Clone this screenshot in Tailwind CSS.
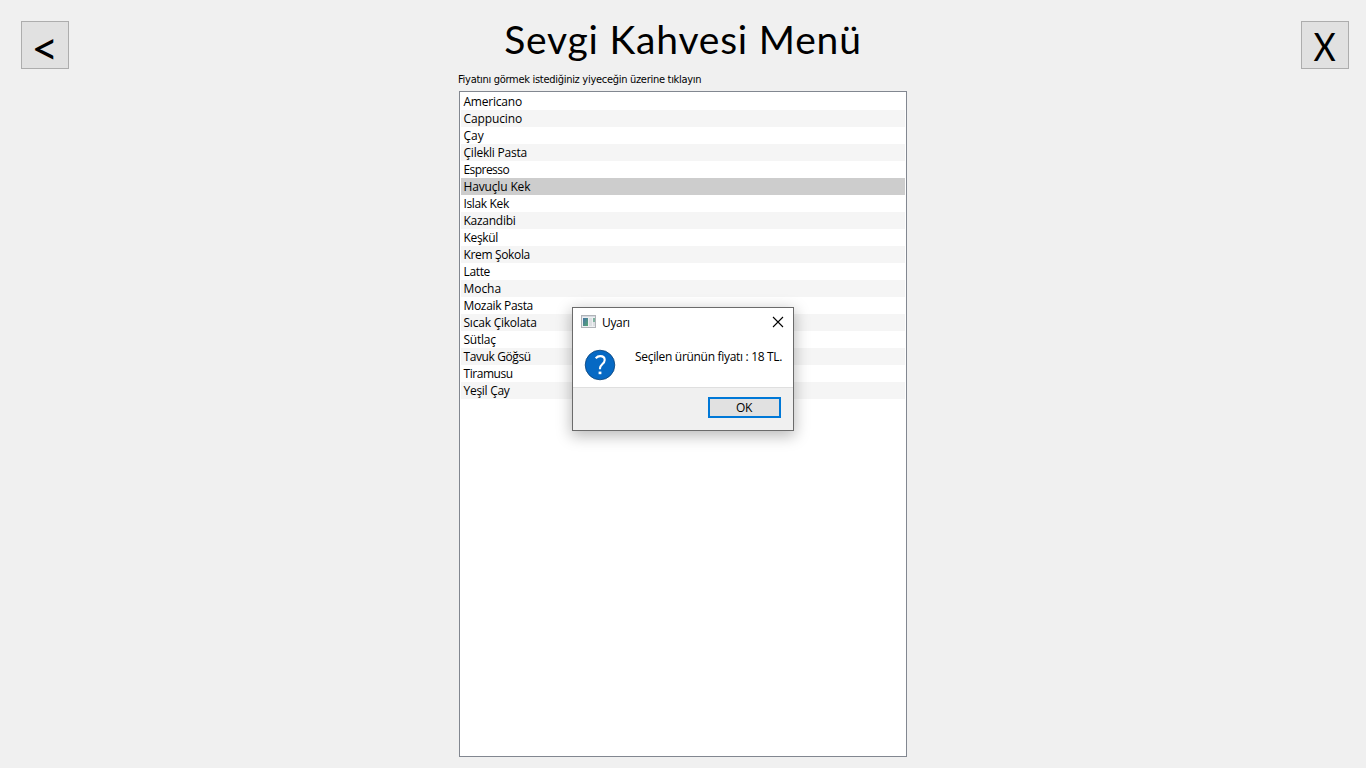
<!DOCTYPE html>
<html lang="tr">
<head>
<meta charset="utf-8">
<title>Sevgi Kahvesi Menü</title>
<script src="https://cdn.jsdelivr.net/npm/@tailwindcss/browser@4"></script>
</head>
<body class="relative flex h-screen w-screen items-start justify-between overflow-hidden bg-[#f0f0f0] pr-[17px] pl-[21px] font-['Open_Sans',sans-serif] text-xs text-black">
<button class="mt-[21px] flex size-12 items-center justify-center border border-[#adadad] bg-[#e1e1e1]" aria-label="Geri"><span class="mt-1 font-['Lato',sans-serif] text-[47px] leading-none">&lt;</span></button>

<main class="mr-1 flex h-full w-[448px] flex-col">
  <h1 class="mt-[15px] h-[55px] text-center font-['Lato',sans-serif] text-[39px] leading-[49px] tracking-[0.8px] whitespace-nowrap">Sevgi Kahvesi Menü</h1>
  <p class="-ml-px h-[21px] pt-[3px] font-['DejaVu_Sans_Condensed','DejaVu_Sans',sans-serif] text-[11px] leading-[14px] tracking-[-0.29px] whitespace-nowrap">Fiyatını görmek istediğiniz yiyeceğin üzerine tıklayın</p>
  <ul class="h-[666px] border border-[#828790] bg-white p-px [&>li]:h-[17px] [&>li]:pl-[2.5px] [&>li]:leading-[17px] [&>li]:whitespace-nowrap [&>li:nth-child(even)]:bg-[#f5f5f5]">
    <li class="tracking-[-0.22px]">Americano</li>
    <li class="tracking-[-0.12px]">Cappucino</li>
    <li>Çay</li>
    <li class="tracking-[-0.22px]">Çilekli Pasta</li>
    <li class="tracking-[-0.55px]">Espresso</li>
    <li class="bg-[#cdcdcd]! tracking-[-0.15px]">Havuçlu Kek</li>
    <li class="tracking-[-0.35px]">Islak Kek</li>
    <li class="tracking-[-0.27px]">Kazandibi</li>
    <li class="tracking-[-0.35px]">Keşkül</li>
    <li class="tracking-[-0.35px]">Krem Şokola</li>
    <li class="tracking-[-0.35px]">Latte</li>
    <li class="tracking-[-0.05px]">Mocha</li>
    <li class="tracking-[-0.32px]">Mozaik Pasta</li>
    <li class="tracking-[-0.22px]">Sıcak Çikolata</li>
    <li class="tracking-[-0.25px]">Sütlaç</li>
    <li class="tracking-[-0.4px]">Tavuk Göğsü</li>
    <li class="tracking-[-0.45px]">Tiramusu</li>
    <li class="tracking-[-0.28px]">Yeşil Çay</li>
  </ul>
</main>

<button class="mt-[21px] flex size-12 items-center justify-center border border-[#adadad] bg-[#e1e1e1]" aria-label="Kapat"><span class="mt-[3px] scale-x-[0.88] font-['Lato',sans-serif] text-[39px] leading-none">X</span></button>

<section class="absolute top-[307px] left-[572px] flex h-[124px] w-[222px] flex-col border border-[#6b6b6b] bg-white shadow-[0_4px_14px_1px_rgba(0,0,0,0.27)]">
  <header class="flex h-[30px] items-center pr-[9px] pl-2">
    <svg class="-mt-0.5 size-4" viewBox="0 0 16 16" shape-rendering="crispEdges">
      <defs><linearGradient id="pane" x2="1" y2="1"><stop stop-color="#4672a5"/><stop offset="1" stop-color="#57a775"/></linearGradient></defs>
      <rect y="1" width="15" height="13" fill="#b0b3b8"/><rect x="1" y="2" width="13" height="11" fill="#eef0f2"/>
      <rect x="1" y="2" width="13" height="1" fill="#d5d9e0"/>
      <rect x="2" y="4" width="5" height="8" fill="url(#pane)"/><rect x="8" y="4" width="3" height="8" fill="#dcdfe2"/>
      <rect x="12" y="4" width="2" height="4" fill="#7fb3a0"/><rect x="12" y="8" width="2" height="4" fill="#dcdfe2"/>
    </svg>
    <span class="ml-[5px] tracking-[-0.35px]">Uyarı</span>
    <svg class="-mt-0.5 ml-auto size-3" viewBox="0 0 12 12" fill="none" stroke="#000" stroke-width="1.1"><path d="M1 1l10 10M11 1L1 11"/></svg>
  </header>
  <div class="flex h-[49px] items-start pl-[11px]">
    <svg class="mt-[11px] size-8" viewBox="0 0 32 32"><circle cx="16" cy="16" r="14.8" fill="#0669c4" stroke="#0b4379" stroke-width=".8"/><path d="M11.7 9.2C13 7.8 14.5 7.1 16.2 7.1c2.8 0 4.5 1.6 4.5 3.9 0 4-4.7 4.6-4.7 8.2v1" fill="none" stroke="#fff" stroke-width="2.1"/><rect x="14.6" y="22.6" width="2.8" height="2.6" fill="#fff"/></svg>
    <p class="mt-[11px] ml-[19px] leading-4 tracking-[-0.31px] whitespace-nowrap">Seçilen ürünün fiyatı : 18 TL.</p>
  </div>
  <footer class="flex grow justify-end border-t border-[#dfdfdf] bg-[#f0f0f0] pt-[9px] pr-3">
    <button class="flex h-[21px] w-[73px] items-center justify-center border-2 border-[#0078d7] bg-[#e1e1e1] pr-px leading-4 tracking-[-0.3px]">OK</button>
  </footer>
</section>
</body>
</html>
